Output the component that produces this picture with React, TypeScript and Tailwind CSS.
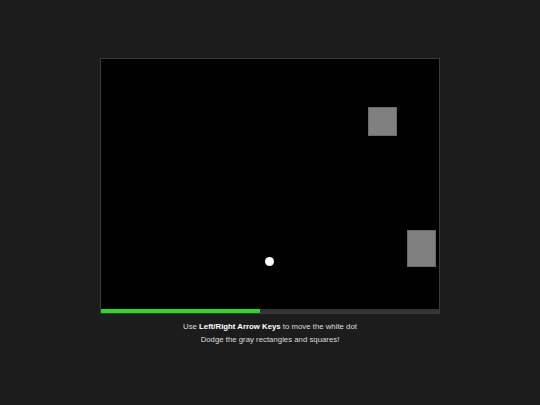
import React from 'react';

const App: React.FC = () => {
  const progress = 47;

  return (
    <div className="min-h-screen w-full bg-[#1c1c1c] flex flex-col items-center justify-center font-['Liberation_Sans',Arial,sans-serif]">
      {/* Game board */}
      <div className="relative w-[340px] h-[256px] bg-black border border-[#3a3a3a]">
        {/* Obstacles */}
        <div className="absolute left-[267px] top-[48px] w-[29px] h-[29px] bg-[#808080] border border-[#6a6a6a]" />
        <div className="absolute left-[306px] top-[171px] w-[29px] h-[37px] bg-[#808080] border border-[#6a6a6a]" />

        {/* Player */}
        <div className="absolute left-[164px] top-[198px] w-[9px] h-[9px] rounded-full bg-white" />

        {/* Progress bar */}
        <div className="absolute left-0 right-0 bottom-0 h-[4px] bg-[#333333]">
          <div className="h-full bg-[#22dd22]" style={{ width: `${progress}%` }} />
        </div>
      </div>

      <div className="mt-[6px] mb-[2px] text-center text-[#dddddd] text-[7.8px] leading-[13px]">
        <p>
          Use <span className="font-bold text-white">Left/Right Arrow Keys</span> to move the white dot
        </p>
        <p>Dodge the gray rectangles and squares!</p>
      </div>
    </div>
  );
};

export default App;
